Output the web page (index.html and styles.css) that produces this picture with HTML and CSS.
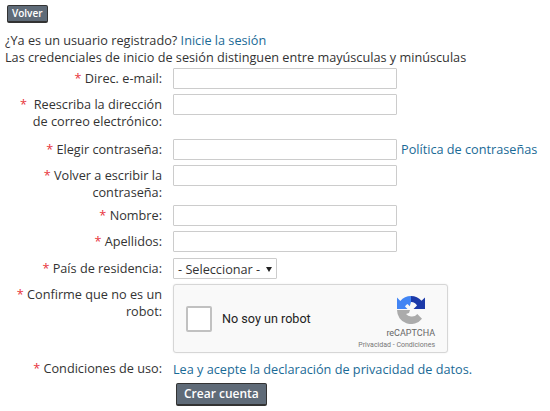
FILE: index.html
```html
<!DOCTYPE html>
<html>
    <head>
        <meta charset="utf-8">
        <link rel="stylesheet" href="styles.css">
    </head>
    <body>
        <div class="container">
            <a class="btn btn-small" href="#">Volver</a>
            <p class="intro">¿Ya es un usuario registrado? <a href="#">Inicie la sesión</a><br>Las credenciales de inicio de sesión distinguen entre mayúsculas y minúsculas</p>
            <form class="signup" action="#" method="POST">
                <div class="row">
                    <label><span class="req">*</span> Direc. e-mail:</label>
                    <input type="text">
                </div>
                <div class="row row-tall">
                    <label><span class="req">*</span>&nbsp; Reescriba la dirección de correo electrónico:</label>
                    <input type="text">
                </div>
                <div class="row">
                    <label><span class="req">*</span> Elegir contraseña:</label>
                    <input type="text">
                    <a class="policy" href="#">Política de contraseñas</a>
                </div>
                <div class="row row-short">
                    <label><span class="req">*</span> Volver a escribir la contraseña:</label>
                    <input type="text">
                </div>
                <div class="row">
                    <label><span class="req">*</span> Nombre:</label>
                    <input type="text">
                </div>
                <div class="row row-last-name">
                    <label><span class="req">*</span> Apellidos:</label>
                    <input type="text">
                </div>
                <div class="row">
                    <label><span class="req">*</span> País de residencia:</label>
                    <div class="select">- Seleccionar - <span class="arrow"></span></div>
                </div>
                <div class="row">
                    <label><span class="req">*</span> Confirme que no es un robot:</label>
                    <div class="captcha">
                        <div class="check"></div>
                        <span class="robot">No soy un robot</span>
                        <div class="brand">
                            <svg class="logo" viewBox="0 0 28 28" width="28" height="28">
                                <path fill="#1c3aa9" d="M14 0a14 14 0 0 1 10.500 4.800L28 1.500V13H16.500l3.500-3.500A6.500 6.500 0 0 0 14 6z"/>
                                <path fill="#4285f4" d="M14 0A14 14 0 0 0 3.300 5L0 1.500V13h10.500L8 10.500A6.500 6.500 0 0 1 10.500 8l2.300 2.300L14 6z"/>
                                <path fill="#ababab" d="M0 14a14 14 0 0 0 25 8.700l-4.700-4.700A6.800 6.800 0 0 1 14 20.500a6.500 6.500 0 0 1-5-2.500l3-1 1-3z"/>
                            </svg>
                            <span class="name">reCAPTCHA</span>
                            <span class="terms">Privacidad - Condiciones</span>
                        </div>
                    </div>
                </div>
                <div class="row">
                    <label><span class="req">*</span> Condiciones de uso:</label>
                    <a class="terms-link" href="#">Lea y acepte la declaración de privacidad de datos.</a>
                </div>
                <div class="row row-submit">
                    <label></label>
                    <button class="btn" type="submit">Crear cuenta</button>
                </div>
            </form>
        </div>
    </body>
</html>
```

FILE: styles.css
```css
*, *:after, *:before {
    box-sizing: border-box;
    margin: 0;
    padding: 0;
}
body {
    font-family: "Open Sans", sans-serif;
    font-size: 12.7px;
    line-height: 17px;
    color: #333;
    background: #FFF;
}
a {
    color: #1a6a96;
    text-decoration: none;
}
.container {
    padding: 4px 5px;
}
.btn {
    display: inline-block;
    background: #5f6b78;
    color: #FFF;
    font-family: "Open Sans", sans-serif;
    font-weight: 600;
    font-size: 12px;
    line-height: 20px;
    border: 1px solid #333;
    border-bottom-width: 2px;
    border-radius: 2px;
    padding: 0 7px;
}
.btn-small {
    font-size: 10px;
    line-height: 15px;
    padding: 0 4px;
    margin-left: 2px;
}
.intro {
    margin-top: 9px;
}
.signup {
    margin-top: 2px;
}
.row {
    display: flex;
    align-items: flex-start;
    margin-bottom: 5px;
}
.row-tall {
    margin-bottom: 9px;
}
.row-short {
    margin-bottom: 4px;
}
.row-last-name {
    margin-bottom: 6px;
}
.row-submit {
    margin-top: 4px;
}
.row-submit .btn {
    margin-left: 3px;
}
.row label {
    flex: none;
    width: 157px;
    margin-right: 11px;
    text-align: right;
    padding-top: 2px;
}
.req {
    color: #e8343c;
}
input {
    width: 224px;
    height: 21px;
    border: 1px solid #ccc;
    border-radius: 1px;
    background: #FFF;
}
.policy {
    margin-left: 4px;
    padding-top: 2px;
}
.select {
    width: 104px;
    height: 21px;
    border: 1px solid #ccc;
    border-radius: 1px;
    padding: 2px 4px 0 4px;
    white-space: nowrap;
    display: flex;
    align-items: center;
    justify-content: space-between;
}
.arrow {
    width: 0;
    height: 0;
    border-top: 5px solid #222;
    border-left: 3px solid transparent;
    border-right: 3px solid transparent;
}
.captcha {
    width: 275px;
    height: 69px;
    background: #f9f9f9;
    border: 1px solid #d6d6d6;
    border-radius: 3px;
    box-shadow: 0 0 2px rgba(0,0,0,0.08);
    display: flex;
    align-items: center;
    padding: 0 12px;
    font-family: Roboto, sans-serif;
    color: #222;
}
.check {
    width: 26px;
    height: 26px;
    background: #FFF;
    border: 2px solid #c1c1c1;
    border-radius: 2px;
    margin-right: 10px;
}
.robot {
    font-size: 12.6px;
    flex: 1;
}
.brand {
    display: flex;
    flex-direction: column;
    align-items: flex-end;
    padding-top: 9px;
}
.logo {
    margin: 0 10px 4px 0;
}
.name {
    font-size: 9px;
    line-height: 11px;
    color: #666;
}
.terms {
    font-size: 7px;
    line-height: 12px;
    color: #777;
}
.terms-link {
    padding-top: 3px;
}
```
